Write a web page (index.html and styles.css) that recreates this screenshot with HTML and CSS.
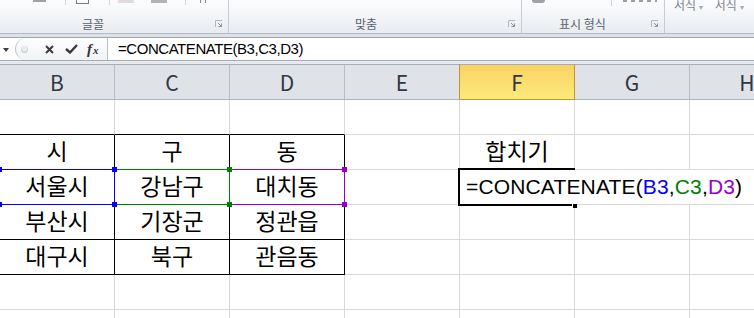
FILE: index.html
```html
<!DOCTYPE html>
<html>
<head>
  <meta charset="utf-8">
  <title>CONCATENATE</title>
  <link rel="stylesheet" href="styles.css">
</head>
<body>
  <div class="ribbon">
    <div class="group g-font">
      <div class="tools">
        <span class="bit bar-a"></span>
        <span class="bit sep-a"></span>
        <span class="bit box-a"></span>
        <span class="bit sep-b"></span>
        <span class="bit bar-pink"></span>
        <span class="bit bar-gray"></span>
        <span class="bit sep-c"></span>
        <span class="bit glyph-a"></span>
      </div>
      <div class="label-row">
        <span class="label lbl-font">글꼴</span>
        <svg class="launcher" width="8" height="8" viewBox="0 0 8 8"><path d="M0.5 7V0.5H7" stroke="#b3b9c2" fill="none"/><path d="M3 3L6.5 6.5M6.5 3.5V6.5H3.5" stroke="#8b929d" fill="none"/></svg>
      </div>
    </div>
    <div class="group g-align">
      <div class="tools"></div>
      <div class="label-row">
        <span class="label lbl-align">맞춤</span>
        <svg class="launcher" width="8" height="8" viewBox="0 0 8 8"><path d="M0.5 7V0.5H7" stroke="#b3b9c2" fill="none"/><path d="M3 3L6.5 6.5M6.5 3.5V6.5H3.5" stroke="#8b929d" fill="none"/></svg>
      </div>
    </div>
    <div class="group g-number">
      <div class="tools">
        <span class="bit bar-b"></span>
        <span class="bit sep-d"></span>
        <span class="bit dots"></span>
      </div>
      <div class="label-row">
        <span class="label lbl-number">표시 형식</span>
        <svg class="launcher" width="8" height="8" viewBox="0 0 8 8"><path d="M0.5 7V0.5H7" stroke="#b3b9c2" fill="none"/><path d="M3 3L6.5 6.5M6.5 3.5V6.5H3.5" stroke="#8b929d" fill="none"/></svg>
      </div>
    </div>
    <div class="group g-style">
      <div class="styles">
        <span class="style-btn">서식 <small>▾</small></span>
        <span class="style-btn">서식 <small>▾</small></span>
      </div>
    </div>
  </div>
  <div class="ribbon-gap"></div>

  <div class="formula-bar">
    <div class="name-box">
      <svg width="6" height="4" viewBox="0 0 6 4"><path d="M0 0H6L3 4Z" fill="#3d3d3d"/></svg>
    </div>
    <div class="fx-buttons">
      <span class="grip"></span>
      <svg class="btn-x" width="9" height="9" viewBox="0 0 9 9"><path d="M1 1L8 8M8 1L1 8" stroke="#3a3a3a" stroke-width="2"/></svg>
      <svg class="btn-ok" width="13" height="10" viewBox="0 0 13 10"><path d="M1 5L5 8.5L12 1" stroke="#3a3a3a" stroke-width="2.4" fill="none"/></svg>
      <span class="btn-fx"><i>f</i><i class="x">x</i></span>
    </div>
    <div class="formula-input">=CONCATENATE(B3,C3,D3)</div>
  </div>
  <div class="sheet-gap"></div>

  <div class="sheet">
    <div class="grid">
      <div class="hdr">B</div>
      <div class="hdr">C</div>
      <div class="hdr">D</div>
      <div class="hdr pre">E</div>
      <div class="hdr sel">F</div>
      <div class="hdr">G</div>
      <div class="hdr">H</div>

      <div class="cell top"></div>
      <div class="cell top"></div>
      <div class="cell top"></div>
      <div class="cell"></div>
      <div class="cell"></div>
      <div class="cell"></div>
      <div class="cell"></div>

      <div class="cell t">시</div>
      <div class="cell t">구</div>
      <div class="cell t">동</div>
      <div class="cell"></div>
      <div class="cell">합치기</div>
      <div class="cell"></div>
      <div class="cell"></div>

      <div class="cell t">서울시</div>
      <div class="cell t">강남구</div>
      <div class="cell t">대치동</div>
      <div class="cell"></div>
      <div class="cell formula">=CONCATENATE(<span class="ref-b">B3</span>,<span class="ref-c">C3</span>,<span class="ref-d">D3</span>)</div>

      <div class="cell t">부산시</div>
      <div class="cell t">기장군</div>
      <div class="cell t">정관읍</div>
      <div class="cell"></div>
      <div class="cell"></div>
      <div class="cell"></div>
      <div class="cell"></div>

      <div class="cell t">대구시</div>
      <div class="cell t">북구</div>
      <div class="cell t">관음동</div>
      <div class="cell"></div>
      <div class="cell"></div>
      <div class="cell"></div>
      <div class="cell"></div>

      <div class="cell"></div>
      <div class="cell"></div>
      <div class="cell"></div>
      <div class="cell"></div>
      <div class="cell"></div>
      <div class="cell"></div>
      <div class="cell"></div>

      <div class="cell"></div>
      <div class="cell"></div>
      <div class="cell"></div>
      <div class="cell"></div>
      <div class="cell"></div>
      <div class="cell"></div>
      <div class="cell"></div>
    </div>

    <!-- reference highlights for B3, C3, D3 -->
    <div class="ref-box ref-purple"><i class="h tl"></i><i class="h tr"></i><i class="h bl"></i><i class="h br"></i></div>
    <div class="ref-box ref-green"><i class="h tl"></i><i class="h tr"></i><i class="h bl"></i><i class="h br"></i></div>
    <div class="ref-box ref-blue"><i class="h tl"></i><i class="h tr"></i><i class="h bl"></i><i class="h br"></i></div>

    <!-- active cell -->
    <div class="active-cell"><i class="fill-handle"></i></div>
  </div>
</body>
</html>
```

FILE: styles.css
```css
* {
  box-sizing: border-box;
}
body {
  margin: 0;
  width: 754px;
  height: 318px;
  overflow: hidden;
  background: #fff;
  font-family: "Liberation Sans", "Noto Sans CJK KR", sans-serif;
}

/* ribbon */
.ribbon {
  display: flex;
  height: 34px;
  border-bottom: 1px solid #b4bbc5;
  background: linear-gradient(#fbfcfd, #f2f4f7 55%, #e8ebef);
}
.group {
  flex: none;
  display: flex;
  flex-direction: column;
  justify-content: space-between;
  border-right: 1px solid #c6ccd4;
}
.g-font { width: 229px; }
.g-align { width: 293px; }
.g-number { width: 143px; }
.g-style { flex: 1; border-right: none; }

.tools {
  display: flex;
  align-items: flex-start;
  height: 6px;
}
.bit { display: block; flex: none; }
.bar-a { margin-left: 33px; width: 13px; height: 2px; background: #a2a2a2; }
.sep-a { margin-left: 19px; width: 1px; height: 5px; background: #d3d7dd; }
.box-a { margin-left: 10px; width: 13px; height: 4px; border: 1px solid #7a7a7a; border-top: none; }
.sep-b { margin-left: 20px; width: 1px; height: 5px; background: #d3d7dd; }
.bar-pink { margin-left: 8px; width: 16px; height: 3px; background: #e3dadd; }
.bar-gray { margin-left: 17px; width: 16px; height: 3px; background: #b3b3b3; }
.sep-c { margin-left: 18px; width: 1px; height: 5px; background: #d3d7dd; }
.glyph-a { margin-left: 14px; width: 6px; height: 3px; border-left: 1px solid #888; border-right: 1px solid #888; }
.bar-b { margin-left: 10px; width: 13px; height: 3px; background: #9da2a8; border-radius: 0 0 3px 3px; }
.sep-d { margin-left: 66px; width: 1px; height: 6px; background: #c9ced5; }
.dots { margin-left: 11px; width: 34px; height: 2px; background: repeating-linear-gradient(90deg, #9b9fa5 0 4px, transparent 4px 8px); }

.label-row {
  display: flex;
  align-items: center;
  height: 14px;
  margin-bottom: 2px;
}
.label {
  font-family: "Noto Sans CJK KR", sans-serif;
  font-size: 12px;
  line-height: 14px;
  color: #586274;
  white-space: nowrap;
}
.lbl-font { margin-left: 82px; }
.lbl-align { margin-left: 126px; }
.lbl-number { margin-left: 37px; }
.launcher {
  display: block;
  margin-left: auto;
  margin-right: 5px;
}

.styles {
  display: flex;
  margin-top: -2px;
}
.style-btn {
  font-family: "Noto Sans CJK KR", sans-serif;
  font-size: 12px;
  line-height: 13px;
  color: #7d8591;
  margin-left: 9px;
  white-space: nowrap;
}
.style-btn + .style-btn { margin-left: 12px; }
.style-btn small { font-size: 8px; color: #a4aab3; }

.ribbon-gap {
  height: 3px;
  background: #dde1e6;
}

/* formula bar */
.formula-bar {
  display: flex;
  height: 24px;
  border-top: 1px solid #a0a6ae;
  border-bottom: 1px solid #a6acb4;
  background: #fff;
}
.name-box {
  width: 15px;
  display: flex;
  align-items: center;
  padding-left: 3px;
  padding-top: 1px;
}
.name-box svg { display: block; }
.fx-buttons {
  width: 93px;
  display: flex;
  align-items: center;
  border-left: 1px solid #bfc4cb;
  border-right: 1px solid #b9bec5;
  border-radius: 11px 0 0 11px;
  background: linear-gradient(#fdfdfe, #f1f3f6);
}
.grip {
  margin-left: 5px;
  width: 7px;
  height: 7px;
  border-radius: 50%;
  background: radial-gradient(circle at 50% 40%, #eceef1 0 35%, #c5c9cf 70%);
}
.btn-x { display: block; margin-left: 17px; }
.btn-ok { display: block; margin-left: 11px; }
.btn-fx {
  margin-left: 9px;
  font-family: "Liberation Serif", serif;
  font-style: italic;
  font-weight: bold;
  font-size: 15px;
  line-height: 16px;
  color: #333;
}
.btn-fx i { font-style: italic; }
.btn-fx .x { font-size: 11px; margin-left: 1px; }

.formula-input {
  flex: 1;
  padding-left: 10px;
  font-size: 15px;
  line-height: 22px;
  letter-spacing: -0.45px;
  color: #000;
  white-space: nowrap;
}

.sheet-gap {
  height: 3px;
  background: #e6e9ed;
}

/* sheet */
.sheet {
  position: relative;
}
.grid {
  display: grid;
  grid-template-columns: repeat(7, 115px);
}
.hdr {
  height: 36px;
  border-top: 1px solid #a7adb5;
  border-bottom: 1px solid #b1b6bd;
  border-right: 1px solid #b9bdc3;
  background: #dfe2e7;
  font-family: "Noto Sans CJK KR", sans-serif;
  font-size: 21px;
  line-height: 32px;
  padding-top: 1px;
  text-align: center;
  color: #2f3744;
}
.hdr.pre { border-right-color: #c8922e; }
.hdr.sel {
  background: linear-gradient(#f9d263, #feea7c);
  border-right-color: #c8922e;
  border-bottom-color: #c8922e;
}
.cell {
  height: 35px;
  border-right: 1px solid #d9d9d9;
  border-bottom: 1px solid #d9d9d9;
  font-size: 23px;
  line-height: 34px;
  text-align: center;
  color: #000;
  white-space: nowrap;
}
.cell.top { border-bottom-color: #000; }
.cell.t {
  border-right-color: #000;
  border-bottom-color: #000;
}
.cell.formula {
  grid-column: span 3;
  border-right: none;
  text-align: left;
  padding-left: 6px;
  font-size: 21px;
  letter-spacing: 0.15px;
}
.ref-b { color: #0000ff; }
.ref-c { color: #008000; }
.ref-d { color: #9900cc; }

.ref-box {
  position: absolute;
  top: 105px;
  width: 116px;
  height: 36px;
  border: 1px solid;
}
.ref-blue { left: -1px; border-color: #0000ff; color: #0000ff; }
.ref-green { left: 114px; border-color: #008000; color: #008000; }
.ref-purple { left: 229px; border-color: #9900cc; color: #9900cc; }
.h {
  position: absolute;
  width: 5px;
  height: 5px;
  background: currentColor;
}
.h.tl { left: -3px; top: -3px; }
.h.tr { right: -3px; top: -3px; }
.h.bl { left: -3px; bottom: -3px; }
.h.br { right: -3px; bottom: -3px; }

.active-cell {
  position: absolute;
  left: 458px;
  top: 104px;
  width: 117px;
  height: 38px;
  border: 2px solid #000;
  border-right: none;
}
.fill-handle {
  position: absolute;
  right: -2px;
  bottom: -4px;
  width: 5px;
  height: 5px;
  background: #000;
  border-left: 1px solid #fff;
  border-top: 1px solid #fff;
}
```
